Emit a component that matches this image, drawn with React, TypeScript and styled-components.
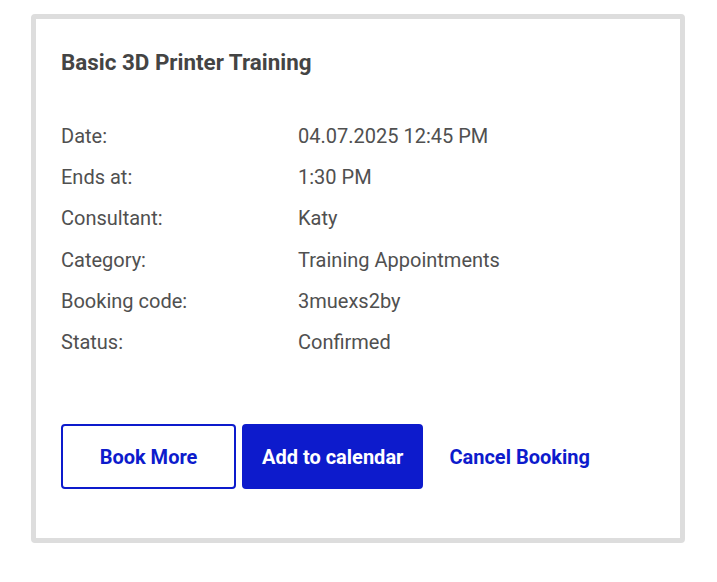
import styled, { createGlobalStyle } from "styled-components";

const GlobalStyle = createGlobalStyle`
  body {
    margin: 0;
    background: #fff;
    font-family: Roboto, "Liberation Sans", Arial, sans-serif;
  }
`;

const Page = styled.div`
  padding: 14px 32px 0 31px;
`;

const Card = styled.div`
  box-sizing: border-box;
  width: 654px;
  border: 5px solid #dddddd;
  border-radius: 4px;
  padding: 30px 25px 49px 25px;
  background: #fff;
`;

const Title = styled.h2`
  margin: 0 0 40px 0;
  font-size: 22.4px;
  line-height: 27px;
  font-weight: 700;
  color: #444444;
`;

const Details = styled.dl`
  margin: 0 0 61px 0;
  display: grid;
  grid-template-columns: 237px 1fr;
  grid-auto-rows: 41.2px;
  font-size: 20px;
  line-height: 41.2px;
  color: #505050;
`;

const Label = styled.dt`
  margin: 0;
`;

const Value = styled.dd`
  margin: 0;
`;

const Actions = styled.div`
  display: flex;
  gap: 6px;
  align-items: center;
`;

type Variant = "outline" | "solid" | "link";

const Button = styled.button<{ $variant: Variant }>`
  box-sizing: border-box;
  height: 65px;
  min-width: ${(p) => (p.$variant === "link" ? "0" : "175px")};
  padding: 0 18px;
  border-radius: 4px;
  font-family: Roboto, "Liberation Sans", Arial, sans-serif;
  font-size: 20px;
  font-weight: 700;
  cursor: pointer;
  border: 2px solid
    ${(p) => (p.$variant === "link" ? "transparent" : "#0d1bcc")};
  background: ${(p) => (p.$variant === "solid" ? "#0d1bcc" : "transparent")};
  color: ${(p) => (p.$variant === "solid" ? "#ffffff" : "#0d1bcc")};
`;

const rows: [string, string][] = [
  ["Date:", "04.07.2025 12:45 PM"],
  ["Ends at:", "1:30 PM"],
  ["Consultant:", "Katy"],
  ["Category:", "Training Appointments"],
  ["Booking code:", "3muexs2by"],
  ["Status:", "Confirmed"],
];

export default function App() {
  return (
    <>
      <GlobalStyle />
      <Page>
        <Card>
          <Title>Basic 3D Printer Training</Title>
          <Details>
            {rows.map(([label, value]) => (
              <>
                <Label key={label}>{label}</Label>
                <Value key={label + "-v"}>{value}</Value>
              </>
            ))}
          </Details>
          <Actions>
            <Button $variant="outline">Book More</Button>
            <Button $variant="solid">Add to calendar</Button>
            <Button $variant="link">Cancel Booking</Button>
          </Actions>
        </Card>
      </Page>
    </>
  );
}
